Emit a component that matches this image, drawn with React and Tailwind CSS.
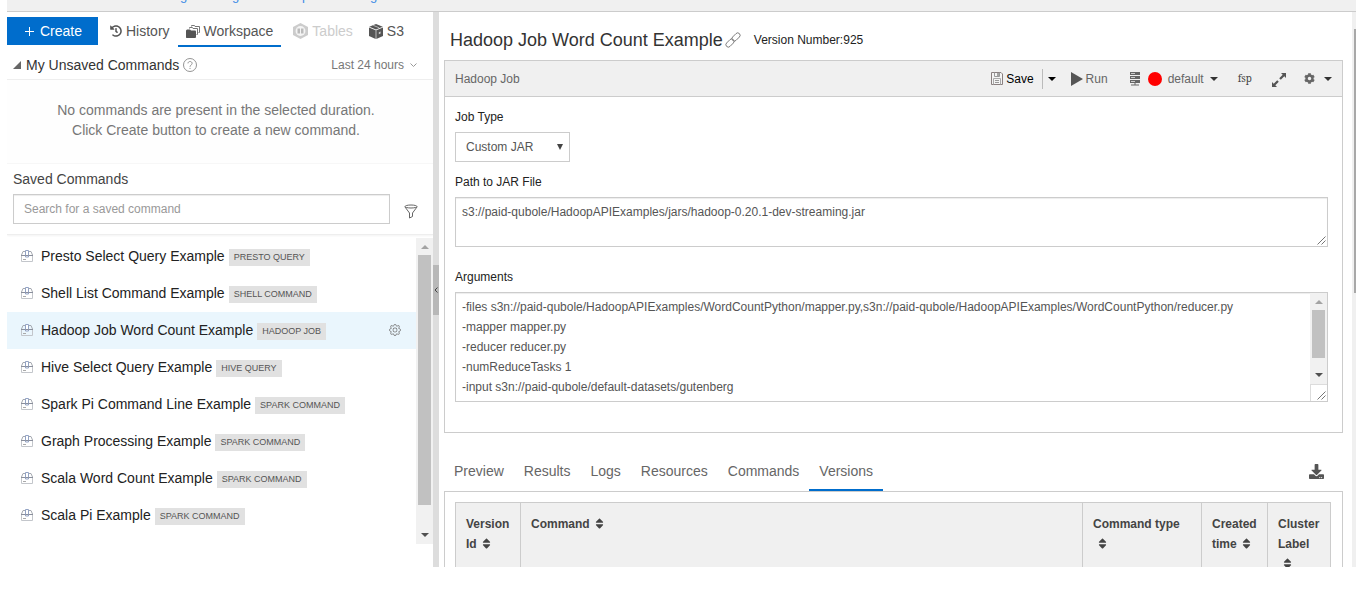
import React from "react";
import { FaHistory, FaSort, FaDownload, FaCog } from "react-icons/fa";
import { BsGear } from "react-icons/bs";

const commands = [
  { name: "Presto Select Query Example", type: "PRESTO QUERY" },
  { name: "Shell List Command Example", type: "SHELL COMMAND" },
  { name: "Hadoop Job Word Count Example", type: "HADOOP JOB", selected: true },
  { name: "Hive Select Query Example", type: "HIVE QUERY" },
  { name: "Spark Pi Command Line Example", type: "SPARK COMMAND" },
  { name: "Graph Processing Example", type: "SPARK COMMAND" },
  { name: "Scala Word Count Example", type: "SPARK COMMAND" },
  { name: "Scala Pi Example", type: "SPARK COMMAND" },
];

const jobArguments = [
  "-files s3n://paid-qubole/HadoopAPIExamples/WordCountPython/mapper.py,s3n://paid-qubole/HadoopAPIExamples/WordCountPython/reducer.py",
  "-mapper mapper.py",
  "-reducer reducer.py",
  "-numReduceTasks 1",
  "-input s3n://paid-qubole/default-datasets/gutenberg",
].join("\n");

function FoldersIcon() {
  return (
    <svg width="14" height="13" viewBox="0 0 14 13" aria-hidden="true">
      <path d="M5.500 1.500V.5h3l.5 1h4.500v6h-1" fill="none" stroke="#777" />
      <path d="M3.500 3.500v-1h3l.5 1h4.500v6h-1" fill="none" stroke="#777" />
      <path d="M0 5.500L1 4.500h3l1 1h4.500l.5 1V12l-.5 1H.5L0 12.500z" fill="#555" />
    </svg>
  );
}

function TablesIcon() {
  return (
    <svg width="15" height="16" viewBox="0 0 15 16" aria-hidden="true">
      <path d="M7.500 0L15 4v8l-7.500 4L0 12V4z" fill="#ccc" />
      <circle cx="7.500" cy="8" r="4.900" fill="#f4f4f4" />
      <path d="M4.500 5.500h2.500v5H4.500zM8 5.500h2.500v5H8z" fill="#bbb" />
    </svg>
  );
}

function CubeIcon() {
  return (
    <svg width="14" height="15" viewBox="0 0 14 15" fill="#555" aria-hidden="true">
      <path d="M7 0l6.800 2.700L7 5.600.2 2.700z" />
      <path d="M0 3.500l6.700 2.800V15L0 12z" />
      <path d="M14 3.500L7.300 6.300V15L14 12z" />
      <path d="M4.200 1.300l6 2.500" stroke="#ddd" strokeWidth=".7" />
      <path d="M9.800 8.300l1.800-.8v2l-1.800.8z" fill="#ccc" />
    </svg>
  );
}

function HelpIcon() {
  return (
    <svg width="14" height="14" viewBox="0 0 14 14" fill="none" stroke="#888" aria-hidden="true">
      <circle cx="7" cy="7" r="6.500" strokeWidth=".9" />
      <path d="M5 5.400c0-2.600 4.100-2.500 4.100 0C9.100 7 7 7 7 8.800M7 9.900v1.100" strokeWidth=".9" />
    </svg>
  );
}

function FunnelIcon() {
  return (
    <svg width="14" height="15" viewBox="0 0 14 15" fill="none" stroke="#666" aria-hidden="true">
      <ellipse cx="7" cy="2.500" rx="6" ry="1.500" />
      <path d="M1 3l4.500 6v5l3-1.500V9L13 3" />
    </svg>
  );
}

function BoxIcon() {
  return (
    <svg width="12" height="12" viewBox="0 0 12 12" fill="none" aria-hidden="true">
      <path d="M.5 5v6.500h11V5" stroke="#c3c6cb" />
      <path d="M.5 5L2 1.500h8L11.500 5" stroke="#a4a8b0" />
      <path d="M0 5.500h12" stroke="#8a8f9c" />
      <path d="M4.500 7V.5h3V7z" fill="#fff" stroke="#93a3c4" />
      <path d="M4.500 5.500h3" stroke="#8a8f9c" />
      <path d="M2 9.500h3" stroke="#aaa" />
    </svg>
  );
}

function LinkIcon() {
  return (
    <svg width="16" height="16" viewBox="0 0 16 16" fill="none" stroke="#777" strokeWidth=".9" aria-hidden="true">
      <rect x="-4.800" y="-2.400" width="9.600" height="4.800" rx="2.400" transform="translate(11 5) rotate(-45)" />
      <rect x="-4.800" y="-2.400" width="9.600" height="4.800" rx="2.400" transform="translate(5 11) rotate(-45)" />
    </svg>
  );
}

function SaveIcon() {
  return (
    <svg width="12" height="13" viewBox="0 0 12 13" fill="none" aria-hidden="true">
      <path d="M.5.5h9.500l1.500 1.500v10.500H.5z" stroke="#8a8080" fill="#f4f4f4" />
      <path d="M3.500.5v4h5v-4" stroke="#999" />
      <path d="M7 1v3" stroke="#555" />
      <path d="M2.500 12.500v-6h7v6" stroke="#aaa" />
      <path d="M4 8.500h4M4 10.500h4" stroke="#999" />
    </svg>
  );
}

function ServerIcon() {
  return (
    <svg width="10" height="14" viewBox="0 0 10 14" aria-hidden="true">
      <path d="M0 0h10v3H0zM0 4h10v3H0zM0 8h10v3H0z" fill="#666" />
      <path d="M1 1.500h4M1 5.500h4M1 9.500h4" stroke="#ccc" />
      <path d="M4.500 11h1v1.500H9v1H1v-1h3.500z" fill="#666" />
    </svg>
  );
}

function ExpandIcon() {
  return (
    <svg width="14" height="14" viewBox="0 0 14 14" fill="#555" aria-hidden="true">
      <path d="M9 0h5v5l-1.700-1.700-3.500 3.500-1.600-1.600 3.500-3.500zM5 14H0V9l1.700 1.700 3.500-3.500 1.600 1.600-3.500 3.500z" />
    </svg>
  );
}

function Caret({ className = "text-[#333]" }) {
  return (
    <svg width="8" height="4" viewBox="0 0 8 4" fill="currentColor" className={className} aria-hidden="true">
      <path d="M0 0h8L4 4z" />
    </svg>
  );
}

function Grip() {
  return (
    <svg width="9" height="9" viewBox="0 0 9 9" stroke="#666" strokeWidth=".9" aria-hidden="true">
      <path d="M.5 8.500l8-8M4.500 8.500l4-4" />
    </svg>
  );
}

function Scrollbar({ thumb }) {
  return (
    <div className="flex w-[17px] shrink-0 flex-col items-center bg-[#f1f1f1]" aria-hidden="true">
      <div className="flex h-[17px] shrink-0 items-center">
        <Caret className="rotate-180 text-[#a3a3a3]" />
      </div>
      <div className={`w-[13px] bg-[#c1c1c1] ${thumb}`} />
      <div className="flex-1" />
      <div className="flex h-[18px] shrink-0 items-center pb-px">
        <Caret className="text-[#505050]" />
      </div>
    </div>
  );
}

function NavTab({ icon, label, active, muted }) {
  return (
    <button
      className={`flex h-[30px] items-center gap-1 border-b-2 px-2 text-sm ${
        active ? "border-[#006dcc]" : "border-transparent"
      } ${muted ? "text-[#ccc]" : "text-[#555]"}`}
    >
      {icon}
      {label}
    </button>
  );
}

function Sidebar() {
  return (
    <aside className="flex w-[426px] shrink-0 flex-col text-sm">
      <nav className="flex gap-1 pt-[5px]">
        <button className="flex h-7 w-[91px] items-center justify-center gap-[6px] bg-[#006dcc] pl-[2px] text-sm text-white">
          <svg width="9" height="9" viewBox="0 0 9 9" stroke="currentColor" aria-hidden="true">
            <path d="M4.500 0v9M0 4.500h9" />
          </svg>
          Create
        </button>
        <div className="flex">
          <NavTab icon={<FaHistory size={12} />} label="History" />
          <NavTab icon={<FoldersIcon />} label="Workspace" active />
          <div className="w-1" />
          <NavTab icon={<TablesIcon />} label="Tables" muted />
          <NavTab icon={<CubeIcon />} label="S3" />
        </div>
      </nav>

      <div className="flex h-[33px] items-center border-b border-[#eee] pl-[6px] pr-4 pt-[3px] shadow-xs">
        <svg width="8" height="8" viewBox="0 0 8 8" className="mr-[5px]" aria-hidden="true">
          <path d="M8 0v8H0z" fill="#666" />
        </svg>
        <h2 className="text-[#333]">My Unsaved Commands</h2>
        <span className="ml-1">
          <HelpIcon />
        </span>
        <button className="ml-auto flex items-center gap-[6px] text-xs text-[#777]">
          Last 24 hours
          <svg width="7" height="4" viewBox="0 0 7 4" fill="none" stroke="#999" aria-hidden="true">
            <path d="M.5.5l3 3 3-3" />
          </svg>
        </button>
      </div>

      <p className="border-b border-[#f7f7f7] bg-[#fefefe] pb-[23px] pl-4 pr-6 pt-5 text-center leading-5 text-[#777]">
        No commands are present in the selected duration.
        <br />
        Click Create button to create a new command.
      </p>

      <div className="border-b border-[#eee] pb-[10px] pl-[6px] pr-[15px] pt-[5px] shadow-xs">
        <label htmlFor="saved-search" className="block leading-5 text-[#444]">
          Saved Commands
        </label>
        <div className="mt-[5px] flex items-center gap-[14px]">
          <input
            id="saved-search"
            type="text"
            placeholder="Search for a saved command"
            className="h-[30px] min-w-0 flex-1 border border-[#ccc] px-[10px] text-xs text-[#555] shadow-[inset_0_1px_1px_rgba(0,0,0,0.075)] outline-none placeholder:text-[#999]"
          />
          <button aria-label="Filter" className="pt-[5px]">
            <FunnelIcon />
          </button>
        </div>
      </div>

      <div className="mt-[3px] flex">
        <ul className="flex-1 pb-[10px]">
          {commands.map((c) => (
            <li
              key={c.name}
              className={`flex h-[37px] items-center pb-[2px] pl-[14px] pr-[15px] ${c.selected ? "bg-[#eaf6fd]" : ""}`}
            >
              <BoxIcon />
              <a href="#command" className="ml-2 text-[#222]">
                {c.name}
              </a>
              <span className="ml-[4px] mt-[3px] h-[17px] bg-[#e1e1e1] px-[5px] text-[9px] leading-[17px] text-[#555]">
                {c.type}
              </span>
              {c.selected && (
                <button aria-label="Command settings" className="ml-auto text-[#777]">
                  <BsGear size={12} />
                </button>
              )}
            </li>
          ))}
        </ul>
        <Scrollbar thumb="h-[250px]" />
      </div>
    </aside>
  );
}

function Toolbar() {
  return (
    <div className="flex h-9 items-center border-b border-[#ccc] bg-[#f0f0f0] pl-[10px] pr-[10px] text-xs text-[#666]">
      <span>Hadoop Job</span>
      <button className="ml-auto flex items-center gap-[3px] text-black">
        <SaveIcon />
        Save
      </button>
      <span className="ml-2 h-5 w-px bg-[#bbb]" />
      <button aria-label="Save options" className="ml-[5px]">
        <Caret className="text-black" />
      </button>
      <button className="ml-[15px] flex items-center gap-[3px]">
        <svg width="12" height="14" viewBox="0 0 12 14" aria-hidden="true">
          <path d="M0 0l12 7-12 7z" fill="#555" />
        </svg>
        Run
      </button>
      <button className="ml-[22px] flex items-center gap-[6px]">
        <ServerIcon />
        <span className="ml-[2px] size-[14px] rounded-full bg-[#f00]" />
        default
        <Caret />
      </button>
      <button className="ml-[20px] font-['Noto_Serif','Liberation_Serif',serif] text-[10px] text-[#444]">fsp</button>
      <button aria-label="Expand" className="ml-[20px] pt-[3px]">
        <ExpandIcon />
      </button>
      <button aria-label="Settings" className="ml-[18px] flex items-center gap-[9px]">
        <FaCog size={11} />
        <Caret />
      </button>
    </div>
  );
}

const fieldShadow = "border border-[#ccc] shadow-[inset_0_1px_1px_rgba(0,0,0,0.075)]";

function JobEditor() {
  return (
    <section className="border border-[#ccc]">
      <Toolbar />
      <form className="pb-[30px] pl-[10px] pr-[14px] pt-[10px] text-xs text-[#555]">
        <label htmlFor="job-type" className="block leading-5 text-[#222]">
          Job Type
        </label>
        <div className="relative mt-[5px] w-[115px]">
          <select
            id="job-type"
            className="h-[30px] w-full appearance-none border border-[#ccc] bg-white px-[10px] text-xs text-[#555]"
          >
            <option>Custom JAR</option>
          </select>
          <svg
            width="6"
            height="6"
            viewBox="0 0 6 6"
            className="pointer-events-none absolute right-[7px] top-[12px]"
            aria-hidden="true"
          >
            <path d="M0 0h6L3 6z" fill="#444" />
          </svg>
        </div>

        <label htmlFor="jar-path" className="mt-[10px] block leading-5 text-[#222]">
          Path to JAR File
        </label>
        <div className={`relative mt-[5px] h-[50px] ${fieldShadow}`}>
          <textarea
            id="jar-path"
            className="block h-full w-full resize-none overflow-hidden px-[6px] py-1 leading-5 outline-none"
            defaultValue="s3://paid-qubole/HadoopAPIExamples/jars/hadoop-0.20.1-dev-streaming.jar"
          />
          <span className="absolute bottom-px right-px">
            <Grip />
          </span>
        </div>

        <label htmlFor="arguments" className="mt-5 block leading-5 text-[#222]">
          Arguments
        </label>
        <div className={`mt-[5px] flex h-[110px] ${fieldShadow}`}>
          <textarea
            id="arguments"
            className="block min-w-0 flex-1 resize-none overflow-hidden px-[6px] py-1 leading-5 outline-none"
            defaultValue={jobArguments}
          />
          <div className="flex flex-col">
            <div className="flex flex-1">
              <Scrollbar thumb="h-[48px]" />
            </div>
            <div className="flex h-[17px] items-end justify-end border-l border-t border-[#dcdcdc] p-px">
              <Grip />
            </div>
          </div>
        </div>
      </form>
    </section>
  );
}

function ResultTabs() {
  const tabs = ["Preview", "Results", "Logs", "Resources", "Commands", "Versions"];
  return (
    <nav className="mt-[18px] flex text-sm text-[#666]">
      {tabs.map((t) => (
        <button
          key={t}
          className={`h-10 border-b-2 px-[10px] pt-[2px] ${
            t === "Versions" ? "border-[#006dcc]" : "border-transparent"
          }`}
        >
          {t}
        </button>
      ))}
      <button aria-label="Download" className="ml-auto mr-[19px] text-[#555]">
        <FaDownload size={15} />
      </button>
    </nav>
  );
}

function VersionsTable() {
  const cell = "border border-[#ccc] px-[10px] pb-[10px] pt-[11px] text-left align-top leading-5";
  const sort = <FaSort size={13} className="inline-block align-[-2px]" />;
  return (
    <section className="border border-[#ccc] pb-10 pl-[10px] pr-[11px] pt-[10px]">
      <table className="w-full table-fixed border-collapse bg-[#f0f0f0] text-xs text-[#444]">
        <colgroup>
          <col className="w-[65px]" />
          <col />
          <col className="w-[119px]" />
          <col className="w-[66px]" />
          <col className="w-[63px]" />
        </colgroup>
        <thead>
          <tr>
            <th className={cell}>Version Id {sort}</th>
            <th className={cell}>Command {sort}</th>
            <th className={cell}>
              Command type
              <br />
              <span className="pl-[3px]">{sort}</span>
            </th>
            <th className={cell}>Created time {sort}</th>
            <th className={cell}>
              Cluster Label
              <br />
              <span className="pl-[3px]">{sort}</span>
            </th>
          </tr>
        </thead>
      </table>
    </section>
  );
}

export default function App() {
  return (
    <div className="h-screen bg-white pb-[31px] pl-[7px] pr-[10px] font-['Liberation_Sans',Arial,sans-serif]">
      <div className="flex h-full flex-col overflow-hidden">
        <header className="flex h-3 shrink-0 items-end overflow-hidden border-b border-[#ccc] bg-[#f0f0f0] pb-[7px] pl-[173px] text-[13px] leading-4 text-[#3b8ae6]">
          <a href="#g1" className="w-[52px]">g</a>
          <a href="#g2" className="w-[70px]">g</a>
          <a href="#p" className="w-[68px]">p</a>
          <a href="#g3">g</a>
        </header>
        <div className="flex min-h-0 flex-1">
          <Sidebar />
          <div className="w-[6px] shrink-0 bg-[#ddd] pt-[253px]">
            <button
              aria-label="Collapse sidebar"
              className="flex h-[50px] w-full items-center justify-center bg-[#b8b8b8]"
            >
              <svg width="4" height="6" viewBox="0 0 4 6" fill="none" stroke="#444" aria-hidden="true">
                <path d="M3.500.5L1 3l2.500 2.500" />
              </svg>
            </button>
          </div>
          <main className="min-w-0 flex-1 overflow-hidden pl-[5px] pr-[9px]">
            <div className="flex h-12 items-center pl-[6px] pt-2">
              <h1 className="text-lg text-[#333]">Hadoop Job Word Count Example</h1>
              <a href="#link" aria-label="Copy link" className="ml-[2px]">
                <LinkIcon />
              </a>
              <span className="ml-[13px] text-xs text-[#222]">Version Number:925</span>
            </div>
            <JobEditor />
            <ResultTabs />
            <VersionsTable />
          </main>
          <div className="flex w-1 shrink-0 flex-col items-end bg-[#f0f0f0] pt-[17px]" aria-hidden="true">
            <div className="h-[264px] w-[2px] bg-[#a8a8a8]" />
          </div>
        </div>
      </div>
    </div>
  );
}
